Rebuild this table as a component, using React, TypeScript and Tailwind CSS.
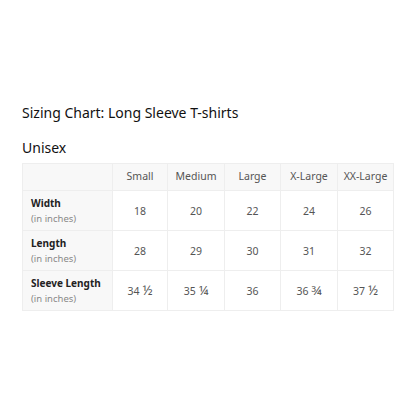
const sizes = ["Small", "Medium", "Large", "X-Large", "XX-Large"];

const rows = [
  { label: "Width", values: [["18"], ["20"], ["22"], ["24"], ["26"]] },
  { label: "Length", values: [["28"], ["29"], ["30"], ["31"], ["32"]] },
  {
    label: "Sleeve Length",
    values: [["34", "½"], ["35", "¼"], ["36"], ["36", "¾"], ["37", "½"]],
  },
];

const colWidths = ["w-[55px]", "w-[57px]", "w-[56px]", "w-[57px]", "w-[56px]"];

export default function App() {
  return (
    <div className="w-[417px] h-[417px] bg-white font-['Noto_Sans',sans-serif] text-[#111]">
      <div className="pt-[103px] pl-[22px]">
        <h2 className="text-[14px] leading-[20px]">Sizing Chart: Long Sleeve T-shirts</h2>
        <h3 className="mt-[15px] text-[14px] leading-[20px]">Unisex</h3>
        <table className="mt-[5px] border-collapse border border-[#eeeeee] w-[371px] table-fixed">
          <thead>
            <tr className="h-[27px] bg-[#f8f8f8]">
              <th className="w-[90px] border border-[#eeeeee]"></th>
              {sizes.map((s, i) => (
                <th
                  key={s}
                  className={`${colWidths[i]} border border-[#eeeeee] text-[10.5px] font-normal text-[#555] text-center`}
                >
                  {s}
                </th>
              ))}
            </tr>
          </thead>
          <tbody>
            {rows.map((r) => (
              <tr key={r.label} className="h-[40px]">
                <td className="bg-[#f8f8f8] border border-[#eeeeee] pl-[8px] align-middle">
                  <div className="text-[10px] font-bold leading-[15px] text-[#222]">{r.label}</div>
                  <div className="text-[9.5px] leading-[15px] text-[#888]">(in inches)</div>
                </td>
                {r.values.map((v, i) => (
                  <td
                    key={i}
                    className="border border-[#eeeeee] text-center text-[10.5px] text-[#555] pt-[3px]"
                  >
                    {v[0]}
                    {v[1] && <span className="ml-[3px] text-[13px] leading-none">{v[1]}</span>}
                  </td>
                ))}
              </tr>
            ))}
          </tbody>
        </table>
      </div>
    </div>
  );
}
